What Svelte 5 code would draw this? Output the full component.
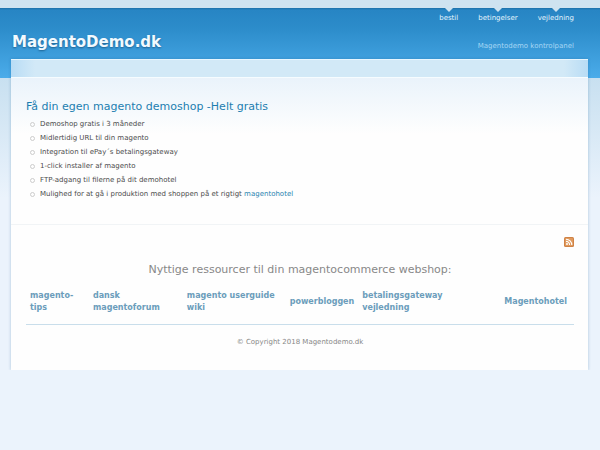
<script lang="ts">
  const menu = ['bestil', 'betingelser', 'vejledning'];

  const features = [
    'Demoshop gratis i 3 måneder',
    'Midlertidig URL til din magento',
    'Integration til ePay´s betalingsgateway',
    '1-click installer af magento',
    'FTP-adgang til filerne på dit demohotel',
  ];

  const resources = [
    'magento-tips',
    'dansk magentoforum',
    'magento userguide wiki',
    'powerbloggen',
    'betalingsgateway vejledning',
    'Magentohotel',
  ];
</script>

<div class="page">
  <header>
    <nav>
      {#each menu as item}
        <a href="#{item}">{item}</a>
      {/each}
    </nav>
    <div class="branding">
      <h1><a href="#top">MagentoDemo.dk</a></h1>
      <a class="panel" href="#kontrolpanel">Magentodemo kontrolpanel</a>
    </div>
  </header>

  <div class="sheet">
    <div class="band"></div>
    <main>
      <h2>Få din egen magento demoshop -Helt gratis</h2>
      <ul>
        {#each features as feature}
          <li><span>{feature}</span></li>
        {/each}
        <li><span>Mulighed for at gå i produktion med shoppen på et rigtigt <a href="#hotel">magentohotel</a></span></li>
      </ul>
    </main>

    <footer>
      <a class="feed" href="#rss" aria-label="RSS">
        <svg viewBox="0 0 10 10" width="10" height="10">
          <rect width="10" height="10" rx="1.5" fill="#cf8245" />
          <rect x="1" y="1" width="8" height="8" rx="1" fill="#e09a5e" />
          <circle cx="3" cy="7" r="1" fill="#fff" />
          <path d="M2 4.4a3.6 3.6 0 0 1 3.6 3.6M2 2.2a5.8 5.8 0 0 1 5.8 5.8" fill="none" stroke="#fff" stroke-width="1.1" />
        </svg>
      </a>
      <h3>Nyttige ressourcer til din magentocommerce webshop:</h3>
      <div class="resources">
        {#each resources as resource}
          <a href="#{resource}">{resource}</a>
        {/each}
      </div>
      <p>© Copyright 2018 Magentodemo.dk</p>
    </footer>
  </div>
</div>

<style>
  :global(body) {
    margin: 0;
    background: #ebf3fc;
  }
  .page {
    min-height: 100vh;
    box-sizing: border-box;
    font: 7px/14px "DejaVu Sans", Verdana, sans-serif;
    color: #4c4c4c;
    background: linear-gradient(#c8e0f0, #ebf3fc) 0 78px / 100% 120px no-repeat;
  }
  a { color: #2a84b0; text-decoration: none; }
  h1, h2, h3, ul, p { margin: 0; padding: 0; font-weight: normal; }

  header {
    height: 78px;
    box-sizing: border-box;
    border-top: 8px solid #cfe3f0;
    padding: 0 26px 0 12px;
    background: linear-gradient(#1d70a8, #2785c4 2px, #2c8cca 20px, #4bacea);
  }
  nav { display: flex; justify-content: flex-end; gap: 20px; }
  nav a {
    display: flex;
    flex-direction: column;
    align-items: center;
    line-height: 12px;
    color: #e4f4fd;
  }
  nav a::before {
    content: "";
    border: 4px solid transparent;
    border-top-color: #cfe3f0;
    border-bottom: 0;
  }
  .branding {
    display: flex;
    justify-content: space-between;
    align-items: flex-end;
    padding-top: 8px;
  }
  h1 { font-size: 15px; line-height: 20px; font-weight: bold; }
  h1 a { color: #f2faff; text-shadow: 0 1px 2px #1b6090; }
  .branding .panel { color: #a5d6f4; line-height: 12px; }

  .sheet {
    position: relative;
    margin: -19px 12px 0 11px;
    background: #fefefe;
    box-shadow: 0 0 3px rgba(20, 90, 140, 0.3);
    clip-path: inset(-4px -4px 0);
  }
  .band {
    height: 19px;
    box-sizing: border-box;
    border-top: 1px solid #e6f6ff;
    border-bottom: 1px solid #f6fcff;
    background: linear-gradient(90deg, #b8dcf5, #d2e9f7 24px, #d2e9f7 calc(100% - 24px), #b8dcf5);
  }
  main {
    padding: 20px 15px 23px;
    border-bottom: 1px solid #f1f4f6;
    background: linear-gradient(#eaf3fb, #fefefe 56px);
  }
  h2 { padding-bottom: 1px; font-size: 11px; line-height: 18px; color: #1c7eb0; }
  ul { list-style: none; }
  li {
    display: flex;
    align-items: center;
    gap: 5px;
    padding-left: 4px;
  }
  li::before {
    content: "";
    width: 3px;
    height: 3px;
    border: 1px solid #ccc;
    border-radius: 50%;
  }

  footer { padding: 12px 14px 21px 15px; color: #888; text-align: center; }
  .feed { display: flex; justify-content: flex-end; }
  h3 { padding-top: 14px; font-size: 11px; line-height: 18px; }
  .resources {
    display: grid;
    grid-template-columns: 63fr 94fr 103fr 71fr 95fr 121fr;
    align-items: center;
    padding: 11px 0 10px;
    border-bottom: 1px solid #c9deeb;
    text-align: left;
  }
  .resources a {
    padding: 0 4px;
    font-size: 8px;
    line-height: 12px;
    font-weight: bold;
    color: #6b9dbb;
  }
  .resources a:last-child { padding-right: 7px; text-align: right; }
  footer p { padding-top: 10px; }
</style>
